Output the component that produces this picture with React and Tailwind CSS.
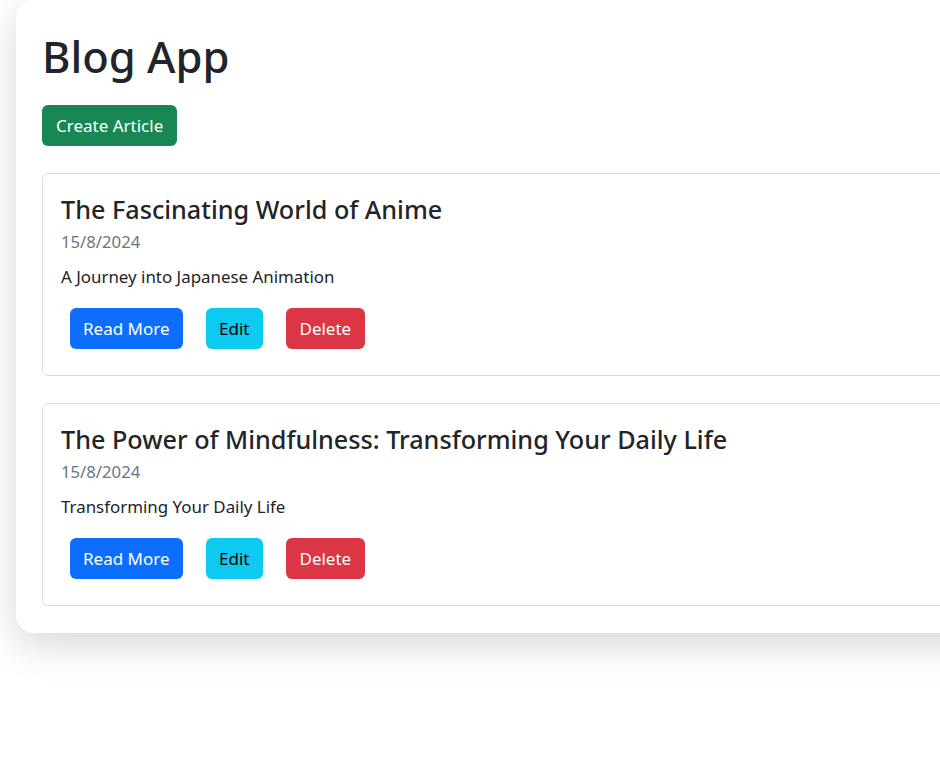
import React from "react";

const articles = [
  {
    id: 1,
    title: "The Fascinating World of Anime",
    date: "15/8/2024",
    summary: "A Journey into Japanese Animation",
  },
  {
    id: 2,
    title: "The Power of Mindfulness: Transforming Your Daily Life",
    date: "15/8/2024",
    summary: "Transforming Your Daily Life",
  },
];

const ArticleCard = ({ article }) => (
  <div className="border border-[#dcdcdc] rounded-[6px] pt-[20px] pb-[26px] px-[18px]">
    <h3 className="text-[25.2px] leading-[30px] font-medium text-[#212529]">
      {article.title}
    </h3>
    <p className="mt-[6px] text-[16.7px] leading-[24px] text-[#6c757d]">{article.date}</p>
    <p className="mt-[11px] text-[16.9px] leading-[24px] text-[#212529]">{article.summary}</p>
    <div className="mt-[19px] flex gap-[23px] px-[9px]">
      <button className="h-[41px] px-[13px] rounded-[6px] bg-[#0d6efd] text-white text-[17px]">
        Read More
      </button>
      <button className="h-[41px] px-[13.5px] rounded-[6px] bg-[#0dcaf0] text-[#000] text-[17px]">
        Edit
      </button>
      <button className="h-[41px] px-[13.5px] rounded-[6px] bg-[#dc3545] text-white text-[17px]">
        Delete
      </button>
    </div>
  </div>
);

export default function App() {
  return (
    <div
      className="min-h-[768px] w-[940px] overflow-hidden bg-white pl-[16px]"
      style={{ fontFamily: '"Noto Sans", "Open Sans", sans-serif' }}
    >
      <div className="w-[1000px] bg-white rounded-l-[18px] shadow-[0_12px_40px_rgba(0,0,0,0.16)] pl-[26px] pr-[40px] pt-[30px] pb-[27px]">
        <h1 className="text-[43.5px] leading-[1.2] font-medium text-[#212529]">Blog App</h1>
        <button className="mt-[23px] h-[41px] px-[14px] rounded-[6px] bg-[#198754] text-white text-[17px]">
          Create Article
        </button>
        <div className="mt-[27px] flex flex-col gap-[27px]">
          {articles.map((a) => (
            <ArticleCard key={a.id} article={a} />
          ))}
        </div>
      </div>
    </div>
  );
}
